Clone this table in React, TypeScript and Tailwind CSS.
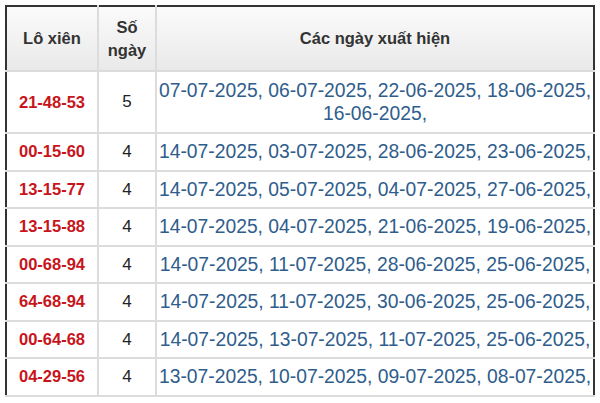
import React from "react";

type Row = { lo: string; days: number; dates: string[] };

const rows: Row[] = [
  { lo: "21-48-53", days: 5, dates: ["07-07-2025", "06-07-2025", "22-06-2025", "18-06-2025", "16-06-2025"] },
  { lo: "00-15-60", days: 4, dates: ["14-07-2025", "03-07-2025", "28-06-2025", "23-06-2025"] },
  { lo: "13-15-77", days: 4, dates: ["14-07-2025", "05-07-2025", "04-07-2025", "27-06-2025"] },
  { lo: "13-15-88", days: 4, dates: ["14-07-2025", "04-07-2025", "21-06-2025", "19-06-2025"] },
  { lo: "00-68-94", days: 4, dates: ["14-07-2025", "11-07-2025", "28-06-2025", "25-06-2025"] },
  { lo: "64-68-94", days: 4, dates: ["14-07-2025", "11-07-2025", "30-06-2025", "25-06-2025"] },
  { lo: "00-64-68", days: 4, dates: ["14-07-2025", "13-07-2025", "11-07-2025", "25-06-2025"] },
  { lo: "04-29-56", days: 4, dates: ["13-07-2025", "10-07-2025", "09-07-2025", "08-07-2025"] },
];

const App: React.FC = () => {
  return (
    <div className="w-[600px] h-[403px] bg-white pt-[5px] pl-[5px] font-['Liberation_Sans',Arial,sans-serif]">
      <table className="w-[590px] border-collapse border-2 border-[#333] table-fixed">
        <colgroup>
          <col className="w-[92px]" />
          <col className="w-[58px]" />
          <col />
        </colgroup>
        <thead>
          <tr className="h-[65px] bg-gradient-to-b from-[#fbfbfb] to-[#e9e9e9] text-[#333] text-[16.5px] font-bold">
            <th className="border-2 border-[#dcdcdc] border-l-[#333] border-t-[#333] leading-[23px]">Lô xiên</th>
            <th className="border-2 border-[#dcdcdc] border-t-[#333] leading-[23px]">
              Số
              <br />
              ngày
            </th>
            <th className="border-2 border-[#dcdcdc] border-t-[#333] border-r-[#333] leading-[23px]">
              Các ngày xuất hiện
            </th>
          </tr>
        </thead>
        <tbody>
          {rows.map((r, i) => (
            <tr key={r.lo} className={i === 0 ? "h-[62px]" : "h-[37.5px]"}>
              <td className="border-2 border-[#dcdcdc] border-l-[#333] text-center text-[16.5px] font-bold text-[#c8141b]">
                {r.lo}
              </td>
              <td className="border-2 border-[#dcdcdc] text-center text-[17px] text-[#222]">{r.days}</td>
              <td className="border-2 border-[#dcdcdc] border-r-[#333] px-0 text-center text-[19.3px] leading-[23px] text-[#2f5d8c]">
                {r.dates.map((d) => `${d}, `).join("")}
              </td>
            </tr>
          ))}
        </tbody>
      </table>
    </div>
  );
};

export default App;
